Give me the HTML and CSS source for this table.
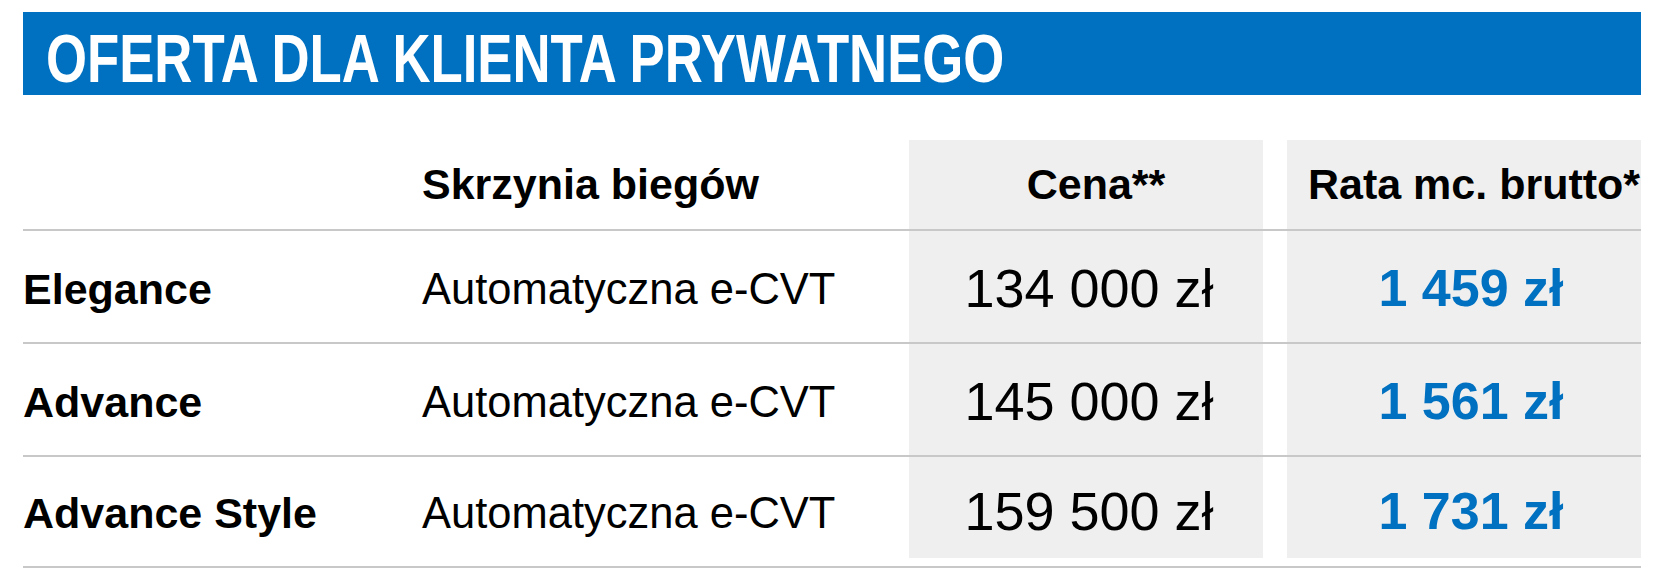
FILE: index.html
```html
<!DOCTYPE html>
<html lang="pl">
<head>
<meta charset="utf-8">
<title>Oferta dla klienta prywatnego</title>
<link rel="stylesheet" href="styles.css">
</head>
<body>
<div class="page">
  <div class="banner"><h1 class="banner-title">OFERTA DLA KLIENTA PRYWATNEGO</h1></div>
  <div class="offer">
    <div class="row head">
      <div class="cell name"></div>
      <div class="cell gear">Skrzynia biegów</div>
      <div class="cell price shade">Cena**</div>
      <div class="cell rate shade">Rata mc. brutto*</div>
    </div>
    <div class="row">
      <div class="cell name">Elegance</div>
      <div class="cell gear">Automatyczna e-CVT</div>
      <div class="cell price shade">134 000 zł</div>
      <div class="cell rate shade">1 459 zł</div>
    </div>
    <div class="row">
      <div class="cell name">Advance</div>
      <div class="cell gear">Automatyczna e-CVT</div>
      <div class="cell price shade">145 000 zł</div>
      <div class="cell rate shade">1 561 zł</div>
    </div>
    <div class="row last">
      <div class="cell name">Advance Style</div>
      <div class="cell gear">Automatyczna e-CVT</div>
      <div class="cell price shade">159 500 zł</div>
      <div class="cell rate shade">1 731 zł</div>
    </div>
  </div>
</div>
</body>
</html>
```
FILE: styles.css
```css
html, body {
  margin: 0;
  padding: 0;
  background: #ffffff;
}
body {
  font-family: "Liberation Sans", Arial, sans-serif;
  color: #000000;
}
.page {
  width: 1618px;
  margin-left: 23px;
  padding-top: 12px;
}
.banner {
  background: #0070c0;
  height: 83px;
  box-sizing: border-box;
  padding: 13px 0 0 23px;
  overflow: hidden;
}
.banner-title {
  margin: 0;
  display: inline-block;
  white-space: nowrap;
  color: #ffffff;
  font-size: 68px;
  line-height: 67px;
  font-weight: bold;
  transform: scaleX(0.775);
  transform-origin: left center;
}
.offer {
  margin-top: 45px;
  padding-bottom: 8px;
  border-bottom: 2px solid #c8c8c8;
}
.row {
  display: grid;
  grid-template-columns: 399px 487px 354px 378px;
  height: 111px;
  border-bottom: 2px solid #c8c8c8;
}
.row.head {
  height: 89px;
}
.row.last {
  height: 101px;
  border-bottom: none;
}
.cell {
  display: flex;
  align-items: center;
  white-space: nowrap;
  box-sizing: border-box;
  padding-top: 6px;
}
.last .cell {
  padding-top: 12px;
}
.shade {
  background: #efefef;
  justify-content: center;
}
.row .shade {
  padding-top: 3px;
}
.last .shade {
  padding-top: 7px;
}
.name {
  font-size: 43px;
  font-weight: bold;
}
.gear {
  font-size: 43.5px;
}
.price {
  font-size: 54px;
  padding-left: 6px;
}
.rate {
  margin-left: 24px;
  font-size: 52px;
  font-weight: bold;
  color: #0070c0;
  padding-left: 14px;
}
.head .cell {
  font-size: 43px;
  font-weight: bold;
  color: #000000;
  padding-top: 0;
  padding-bottom: 1px;
}
.head .shade {
  padding-left: 20px;
}
```
